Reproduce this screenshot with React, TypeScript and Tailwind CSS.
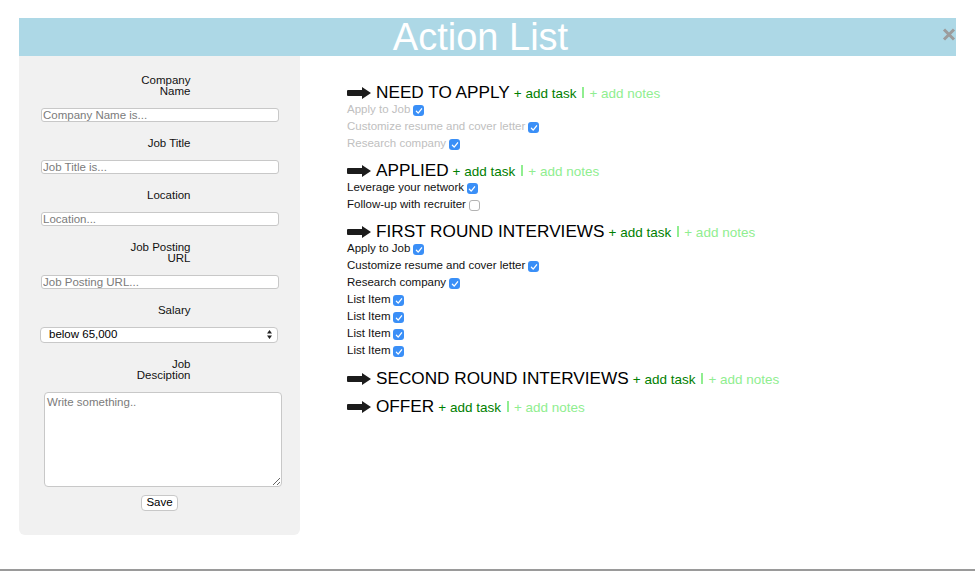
import React from "react";

type Task = { label: string; done: boolean };
type Stage = { title: string; faded?: boolean; tasks: Task[] };

const stages: Stage[] = [
  {
    title: "NEED TO APPLY",
    faded: true,
    tasks: [
      { label: "Apply to Job", done: true },
      { label: "Customize resume and cover letter", done: true },
      { label: "Research company", done: true },
    ],
  },
  {
    title: "APPLIED",
    tasks: [
      { label: "Leverage your network", done: true },
      { label: "Follow-up with recruiter", done: false },
    ],
  },
  {
    title: "FIRST ROUND INTERVIEWS",
    tasks: [
      { label: "Apply to Job", done: true },
      { label: "Customize resume and cover letter", done: true },
      { label: "Research company", done: true },
      { label: "List Item", done: true },
      { label: "List Item", done: true },
      { label: "List Item", done: true },
      { label: "List Item", done: true },
    ],
  },
  { title: "SECOND ROUND INTERVIEWS", tasks: [] },
  { title: "OFFER", tasks: [] },
];

function Arrow() {
  return (
    <svg width="24" height="12" viewBox="0 0 24 12" className="shrink-0">
      <path d="M1 3h14V0l9 6-9 6V9H1a1 1 0 0 1-1-1V4a1 1 0 0 1 1-1z" fill="#1c1c1c" />
    </svg>
  );
}

function Checkbox({ on }: { on: boolean }) {
  if (!on) {
    return <span className="ml-[3px] inline-block h-[11px] w-[11px] translate-y-[1px] rounded-[3px] border border-[#b3b3b3] bg-white" />;
  }
  return (
    <span className="ml-[3px] inline-flex h-[11px] w-[11px] translate-y-[1px] items-center justify-center rounded-[3px] bg-[#3a8ff7]">
      <svg width="8" height="8" viewBox="0 0 8 8">
        <path d="M1.4 4.3l1.8 1.8 3.4-4.3" stroke="white" strokeWidth="1.3" fill="none" strokeLinecap="round" strokeLinejoin="round" />
      </svg>
    </span>
  );
}

function Label({ children }: { children: React.ReactNode }) {
  return <div className="mx-auto mt-[16px] w-[62px] text-right text-[11.5px] leading-[11px] text-[#111] first:mt-0">{children}</div>;
}

function TextInput({ placeholder }: { placeholder: string }) {
  return (
    <input
      placeholder={placeholder}
      className="mt-[11px] ml-[22px] block h-[14px] w-[238px] rounded-[3px] border border-[#c8c8c8] bg-white px-[1px] text-[11.5px] leading-none outline-none placeholder:text-[#7b7b7b]"
    />
  );
}

export default function App() {
  return (
    <div className="h-[571px] border-b-2 border-[#9a9a9a] bg-white font-['Liberation_Sans',Arial,sans-serif]">
      {/* Header */}
      <div className="px-[19px] pt-[18px]">
        <header className="relative flex h-[38px] items-center justify-center bg-[#add8e6] pr-[14px]">
          <h1 className="text-[38px] leading-[38px] text-white">Action List</h1>
          <svg width="14" height="13" viewBox="0 0 14 13" className="absolute right-0 top-[10px]">
            <path d="M2 1.5l10 10M12 1.5l-10 10" stroke="#9c9c9c" strokeWidth="3" />
          </svg>
        </header>
      </div>

      <div className="flex px-[19px]">
        {/* Job form */}
        <aside className="w-[281px] shrink-0 rounded-b-[6px] bg-[#f1f1f1] pt-[19px] pb-[24px]">
          <Label>Company Name</Label>
          <TextInput placeholder="Company Name is..." />
          <Label>Job Title</Label>
          <TextInput placeholder="Job Title is..." />
          <Label>Location</Label>
          <TextInput placeholder="Location..." />
          <Label>Job Posting URL</Label>
          <TextInput placeholder="Job Posting URL..." />
          <Label>Salary</Label>
          <div className="relative mt-[11px] ml-[21px] h-[16px] w-[238px]">
            <select className="block h-full w-full appearance-none rounded-[4px] border border-[#c8c8c8] bg-white pl-[8px] text-[11.5px] leading-none text-black outline-none">
              <option>below 65,000</option>
            </select>
            <svg width="5" height="9" viewBox="0 0 5 9" className="pointer-events-none absolute right-[6px] top-[3px]">
              <path d="M2.5 0L5 3.5H0zM2.5 9L0 5.5h5z" fill="#222" />
            </svg>
          </div>
          <Label>Job Desciption</Label>
          <textarea
            placeholder="Write something.."
            className="mt-[11px] ml-[25px] block h-[95px] w-[238px] rounded-[4px] border border-[#c8c8c8] bg-white px-[2px] pt-[1px] text-[11.5px] outline-none placeholder:text-[#7b7b7b]"
          />
          <button className="mx-auto mt-[8px] block h-[16px] w-[37px] rounded-[4px] border border-[#c8c8c8] bg-white text-[11.5px] leading-none text-black">
            Save
          </button>
        </aside>

        {/* Stages */}
        <main className="ml-[47px] pt-[18px]">
          {stages.map((stage) => (
            <section key={stage.title} className="mt-[10px] last:mt-[11px] [&:nth-child(4)]:mt-[11px]">
              <div className="flex h-[17px] items-center">
                <Arrow />
                <div className="ml-[5px] flex items-baseline">
                  <span className="text-[17.2px] leading-none text-black">{stage.title}</span>
                  <span className="ml-[4px] text-[13.5px] leading-none text-[#008000]">+ add task</span>
                  <span className="ml-[6px] inline-block h-[11px] w-[2px] bg-[#90ee90]" />
                  <span className="ml-[5px] text-[13.5px] leading-none text-[#90ee90]">+ add notes</span>
                </div>
              </div>
              {stage.tasks.map((task, i) => (
                <div
                  key={i}
                  className={`flex h-[17px] items-center text-[11.5px] ${stage.faded ? "text-[#c0c0c0]" : "text-[#111]"}`}
                >
                  <span>{task.label}</span>
                  <Checkbox on={task.done} />
                </div>
              ))}
            </section>
          ))}
        </main>
      </div>
    </div>
  );
}
